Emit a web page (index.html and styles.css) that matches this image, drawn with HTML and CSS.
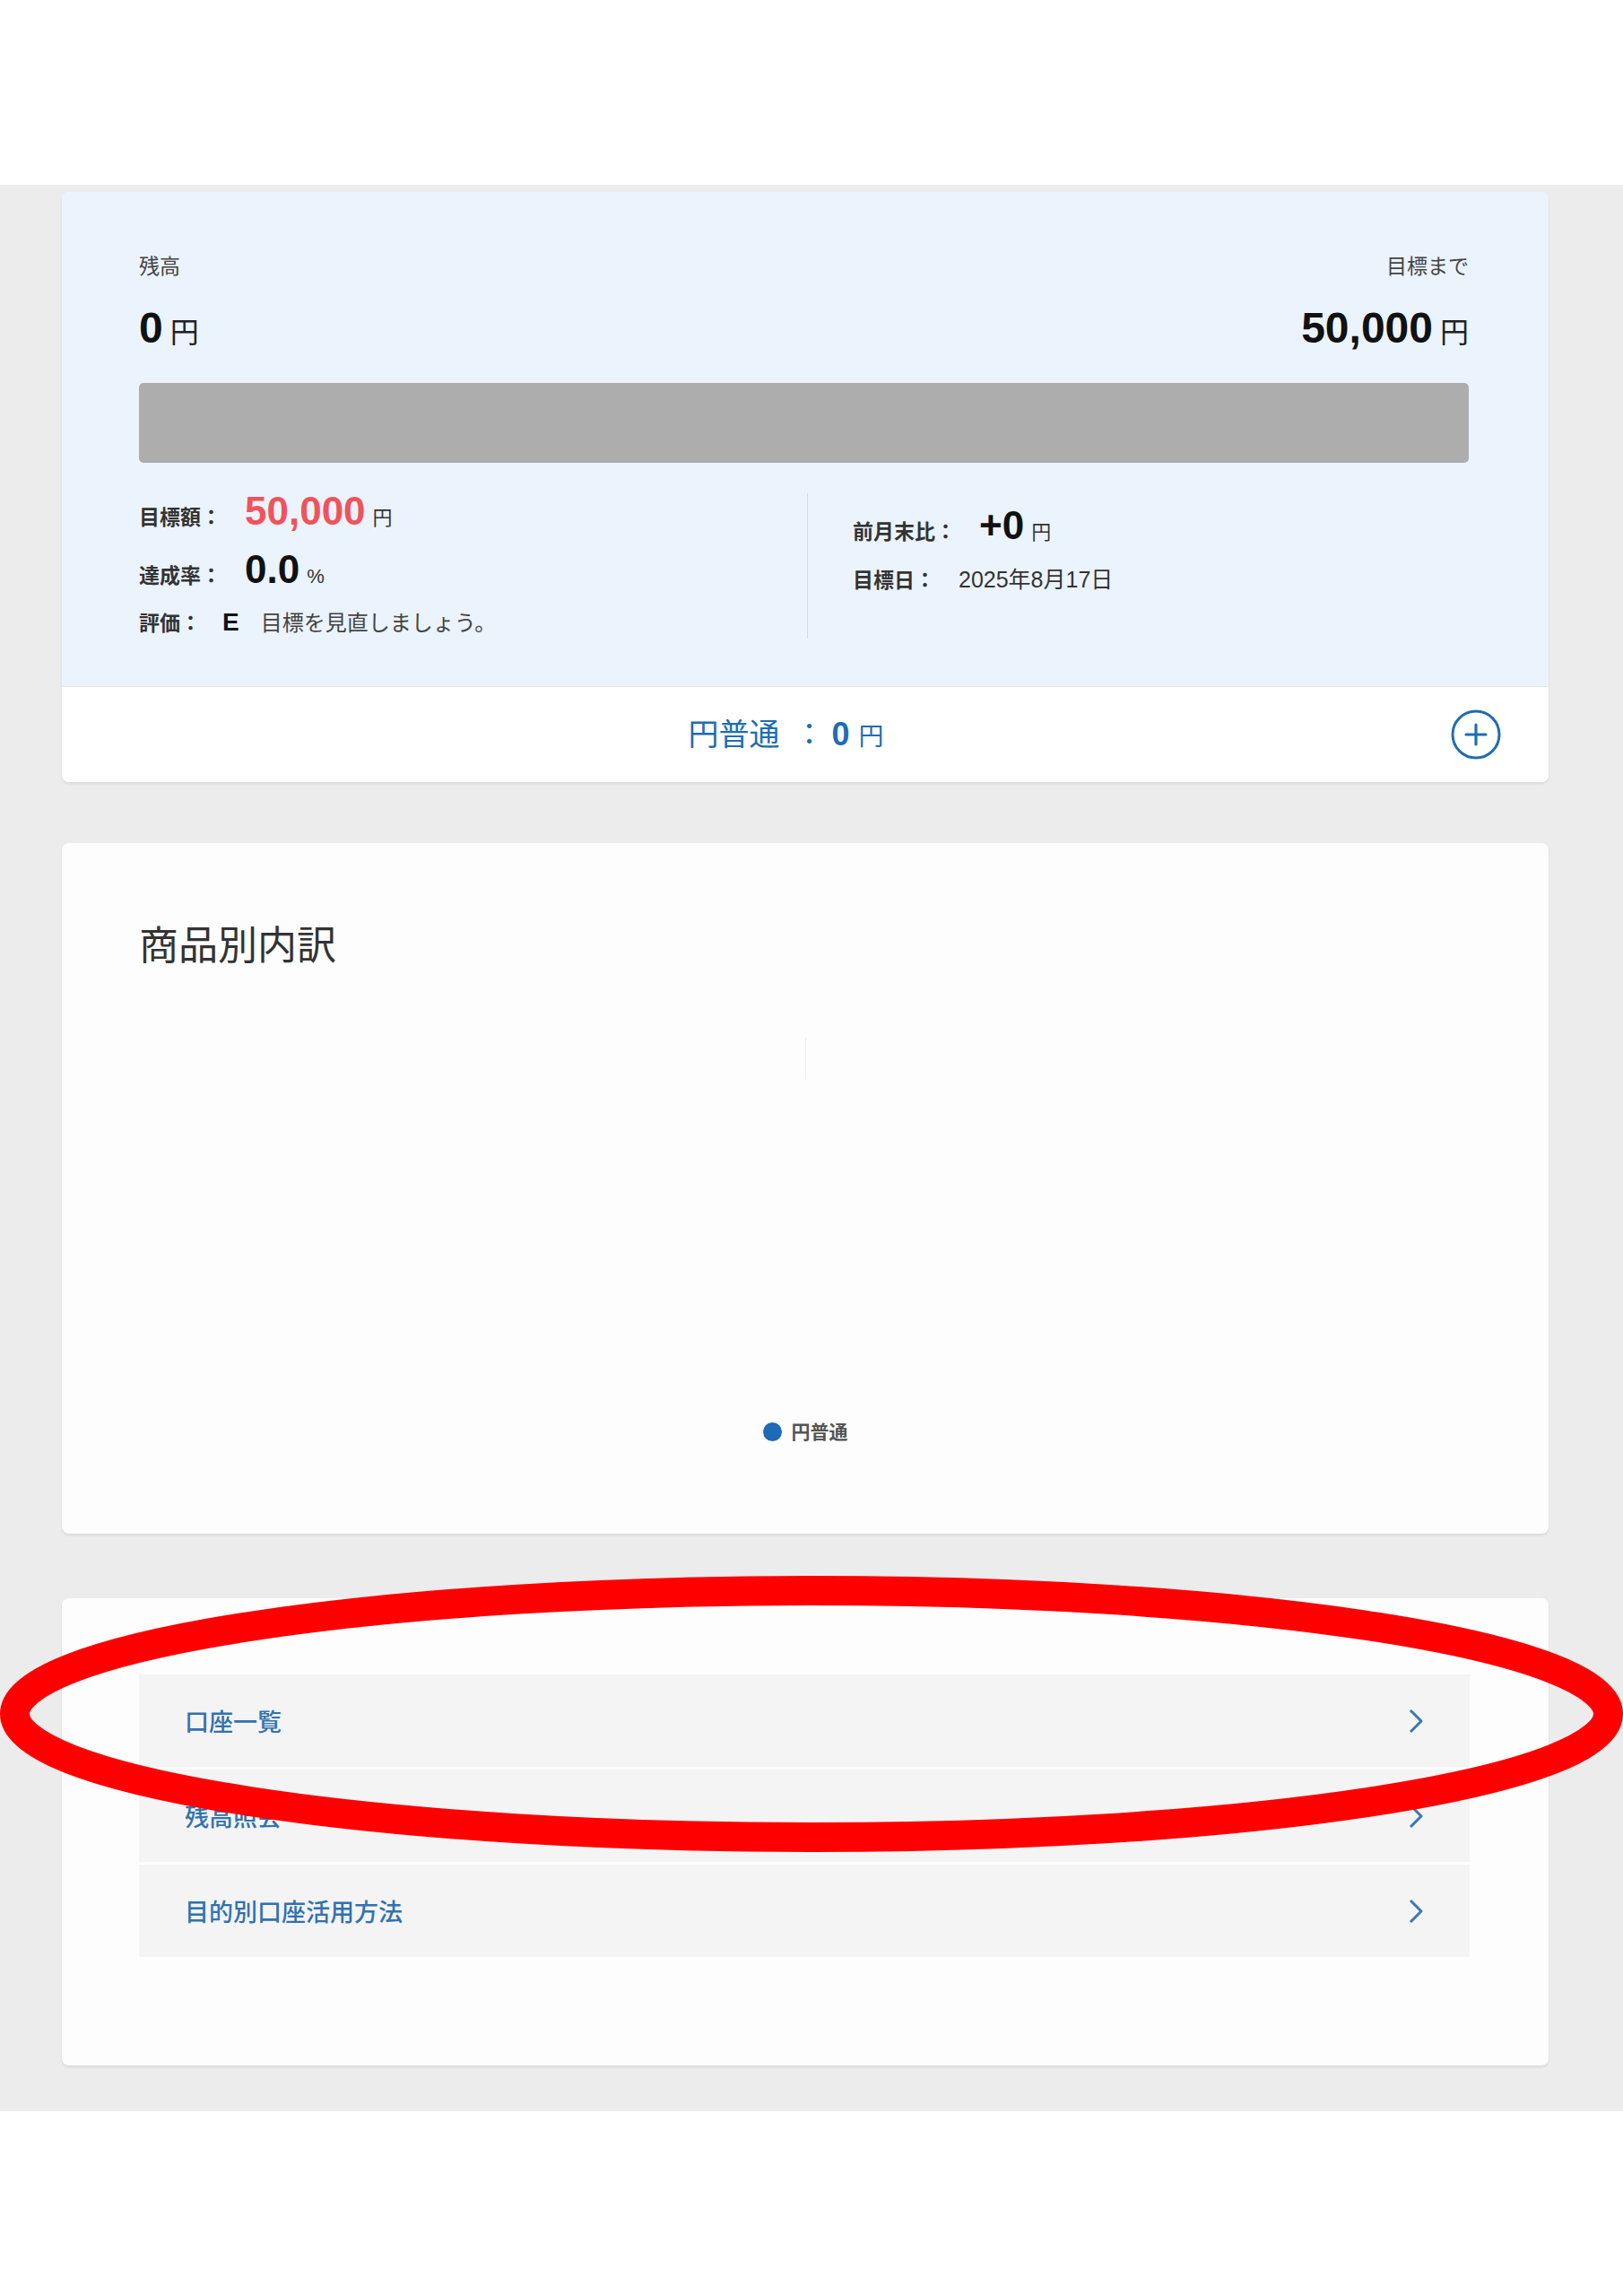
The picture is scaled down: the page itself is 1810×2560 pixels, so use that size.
FILE: index.html
```html
<!DOCTYPE html>
<html lang="ja">
<head>
<meta charset="utf-8">
<title>目的別口座</title>
<link rel="stylesheet" href="styles.css">
</head>
<body>
<div class="top-space"></div>
<main class="main">
  <section class="card goal-card">
    <div class="summary">
      <div class="summary-head">
        <div class="head-col">
          <div class="caption">残高</div>
          <div class="amount"><span class="num">0</span><span class="yen">円</span></div>
        </div>
        <div class="head-col head-right">
          <div class="caption">目標まで</div>
          <div class="amount"><span class="num">50,000</span><span class="yen">円</span></div>
        </div>
      </div>
      <div class="progress"><div class="progress-fill" style="width:0%"></div></div>
      <div class="details">
        <div class="details-left">
          <div class="row row-target"><span class="label">目標額：</span><span class="big red">50,000</span><span class="unit">円</span></div>
          <div class="row row-rate"><span class="label">達成率：</span><span class="big">0.0</span><span class="unit">%</span></div>
          <div class="row row-eval"><span class="label label-eval">評価：</span><span class="grade">E</span><span class="msg">目標を見直しましょう。</span></div>
        </div>
        <div class="details-right">
          <div class="row row-diff"><span class="label">前月末比：</span><span class="big">+0</span><span class="unit">円</span></div>
          <div class="row row-date"><span class="label">目標日：</span><span class="date">2025年8月17日</span></div>
        </div>
      </div>
    </div>
    <div class="account-bar">
      <div class="account-text"><span class="acc-name">円普通</span><span class="acc-colon">：</span><span class="acc-num">0</span><span class="acc-yen">円</span></div>
      <button class="add-btn" type="button" aria-label="追加">
        <svg width="56" height="56" viewBox="0 0 56 56"><circle cx="28" cy="28" r="26" fill="none" stroke="#1f6db3" stroke-width="3"/><path d="M17 28H39M28 17V39" stroke="#1f6db3" stroke-width="3.2" stroke-linecap="round"/></svg>
      </button>
    </div>
  </section>

  <section class="card chart-card">
    <h2 class="chart-title">商品別内訳</h2>
    <div class="chart"><div class="chart-line"></div></div>
    <div class="legend"><span class="legend-dot"></span><span class="legend-text">円普通</span></div>
  </section>

  <section class="card menu-card">
    <ul class="menu">
      <li class="menu-item"><span>口座一覧</span><svg class="chev" width="18" height="28" viewBox="0 0 18 28"><path d="M3 2L15 14L3 26" fill="none" stroke="#3a78b5" stroke-width="3" stroke-linejoin="round"/></svg></li>
      <li class="menu-item"><span>残高照会</span><svg class="chev" width="18" height="28" viewBox="0 0 18 28"><path d="M3 2L15 14L3 26" fill="none" stroke="#3a78b5" stroke-width="3" stroke-linejoin="round"/></svg></li>
      <li class="menu-item"><span>目的別口座活用方法</span><svg class="chev" width="18" height="28" viewBox="0 0 18 28"><path d="M3 2L15 14L3 26" fill="none" stroke="#3a78b5" stroke-width="3" stroke-linejoin="round"/></svg></li>
    </ul>
  </section>
</main>
<svg class="highlight" width="1810" height="308" viewBox="0 0 1810 308"><ellipse cx="905" cy="154" rx="888.5" ry="137.5" fill="none" stroke="#ff0000" stroke-width="33"/></svg>
</body>
</html>
```
FILE: styles.css
```css
body {
  margin: 0;
  background: #ffffff;
  font-family: "Liberation Sans", "Noto Sans CJK JP", sans-serif;
  color: #333333;
  position: relative;
}

.top-space {
  height: 206px;
}

.main {
  background: #ececec;
  padding: 8px 83px 51px 69px;
}

.card {
  background: #fdfdfd;
  border-radius: 8px;
  box-shadow: 0 2px 3px rgba(0, 0, 0, 0.08);
  overflow: hidden;
}

/* summary card */
.summary {
  background: #ebf3fd;
  padding: 68px 89px 53px 86px;
}

.summary-head {
  display: flex;
  justify-content: space-between;
}

.head-col {
  display: flex;
  flex-direction: column;
}

.head-right {
  align-items: flex-end;
}

.caption {
  font-size: 23px;
  line-height: 30px;
  color: #444444;
}

.amount {
  display: flex;
  align-items: baseline;
  height: 60px;
  margin-top: 24px;
}

.num {
  font-size: 48px;
  font-weight: bold;
  line-height: 60px;
  color: #111111;
}

.yen {
  font-size: 32px;
  margin-left: 8px;
  color: #222222;
}

.progress {
  height: 89px;
  margin-top: 31px;
  background: #adadad;
  border-radius: 5px;
  overflow: hidden;
}

.progress-fill {
  height: 100%;
  background: #1f6db3;
}

.details {
  display: flex;
  height: 162px;
  margin-top: 34px;
}

.details-left {
  width: 745px;
  border-right: 1px solid #d3dae3;
}

.details-right {
  padding-left: 50px;
  padding-top: 14px;
}

.row {
  display: flex;
  align-items: baseline;
}

.row-target {
  margin-top: -2px;
  height: 65px;
}

.row-rate {
  height: 67px;
}

.row-diff {
  height: 70px;
}

.label {
  font-size: 23px;
  font-weight: bold;
  line-height: 1;
  margin-right: 26px;
  color: #333333;
}

.label-eval {
  margin-right: 24px;
}

.big {
  font-size: 44px;
  font-weight: bold;
  line-height: 1;
  color: #111111;
}

.red {
  color: #f0535c;
}

.unit {
  font-size: 22px;
  line-height: 1;
  margin-left: 8px;
  color: #333333;
}

.grade {
  font-size: 28px;
  font-weight: bold;
  line-height: 1;
  margin-right: 24px;
  color: #111111;
}

.msg {
  font-size: 24px;
  line-height: 1;
  color: #444444;
}

.date {
  font-size: 25px;
  line-height: 1;
  color: #333333;
}

.account-bar {
  position: relative;
  height: 106px;
  border-top: 1px solid #dfe5ec;
  background: #ffffff;
  display: flex;
  align-items: center;
  justify-content: center;
  padding-right: 43px;
}

.account-text {
  display: flex;
  align-items: baseline;
  color: #1f6db3;
}

.acc-name {
  font-size: 34px;
  line-height: 1;
}

.acc-colon {
  font-size: 34px;
  line-height: 1;
  margin-left: 16px;
}

.acc-num {
  font-size: 36px;
  font-weight: bold;
  line-height: 1;
  margin-left: 8px;
}

.acc-yen {
  font-size: 28px;
  line-height: 1;
  margin-left: 10px;
}

.add-btn {
  position: absolute;
  right: 53px;
  top: 50%;
  margin-top: -28px;
  width: 56px;
  height: 56px;
  padding: 0;
  border: none;
  background: none;
}

.add-btn svg {
  display: block;
}

/* chart card */
.chart-card {
  margin-top: 68px;
  padding: 93px 86px 103px 86px;
}

.chart-title {
  margin: 0;
  font-size: 44px;
  font-weight: normal;
  line-height: 44px;
  color: #333333;
}

.chart {
  height: 508px;
  padding-top: 80px;
  box-sizing: border-box;
}

.chart-line {
  width: 1px;
  height: 47px;
  margin: 0 auto;
  background: #eeeeee;
}

.legend {
  display: flex;
  justify-content: center;
  align-items: center;
  height: 22px;
  gap: 11px;
}

.legend-dot {
  width: 21px;
  height: 21px;
  border-radius: 50%;
  background: #1e6ab4;
}

.legend-text {
  font-size: 21px;
  font-weight: bold;
  line-height: 1;
  color: #555555;
}

/* menu card */
.menu-card {
  margin-top: 72px;
  padding: 85px 88px 121px 86px;
}

.menu {
  list-style: none;
  margin: 0;
  padding: 0;
  display: flex;
  flex-direction: column;
  gap: 3px;
}

.menu-item {
  height: 103px;
  background: #f4f4f4;
  display: flex;
  align-items: center;
  justify-content: space-between;
  padding: 0 51px 0 51px;
  font-size: 27px;
  font-weight: 500;
  color: #3172b0;
}

.chev {
  display: block;
}

.highlight {
  position: absolute;
  top: 1757px;
  left: 0;
  pointer-events: none;
}
```
